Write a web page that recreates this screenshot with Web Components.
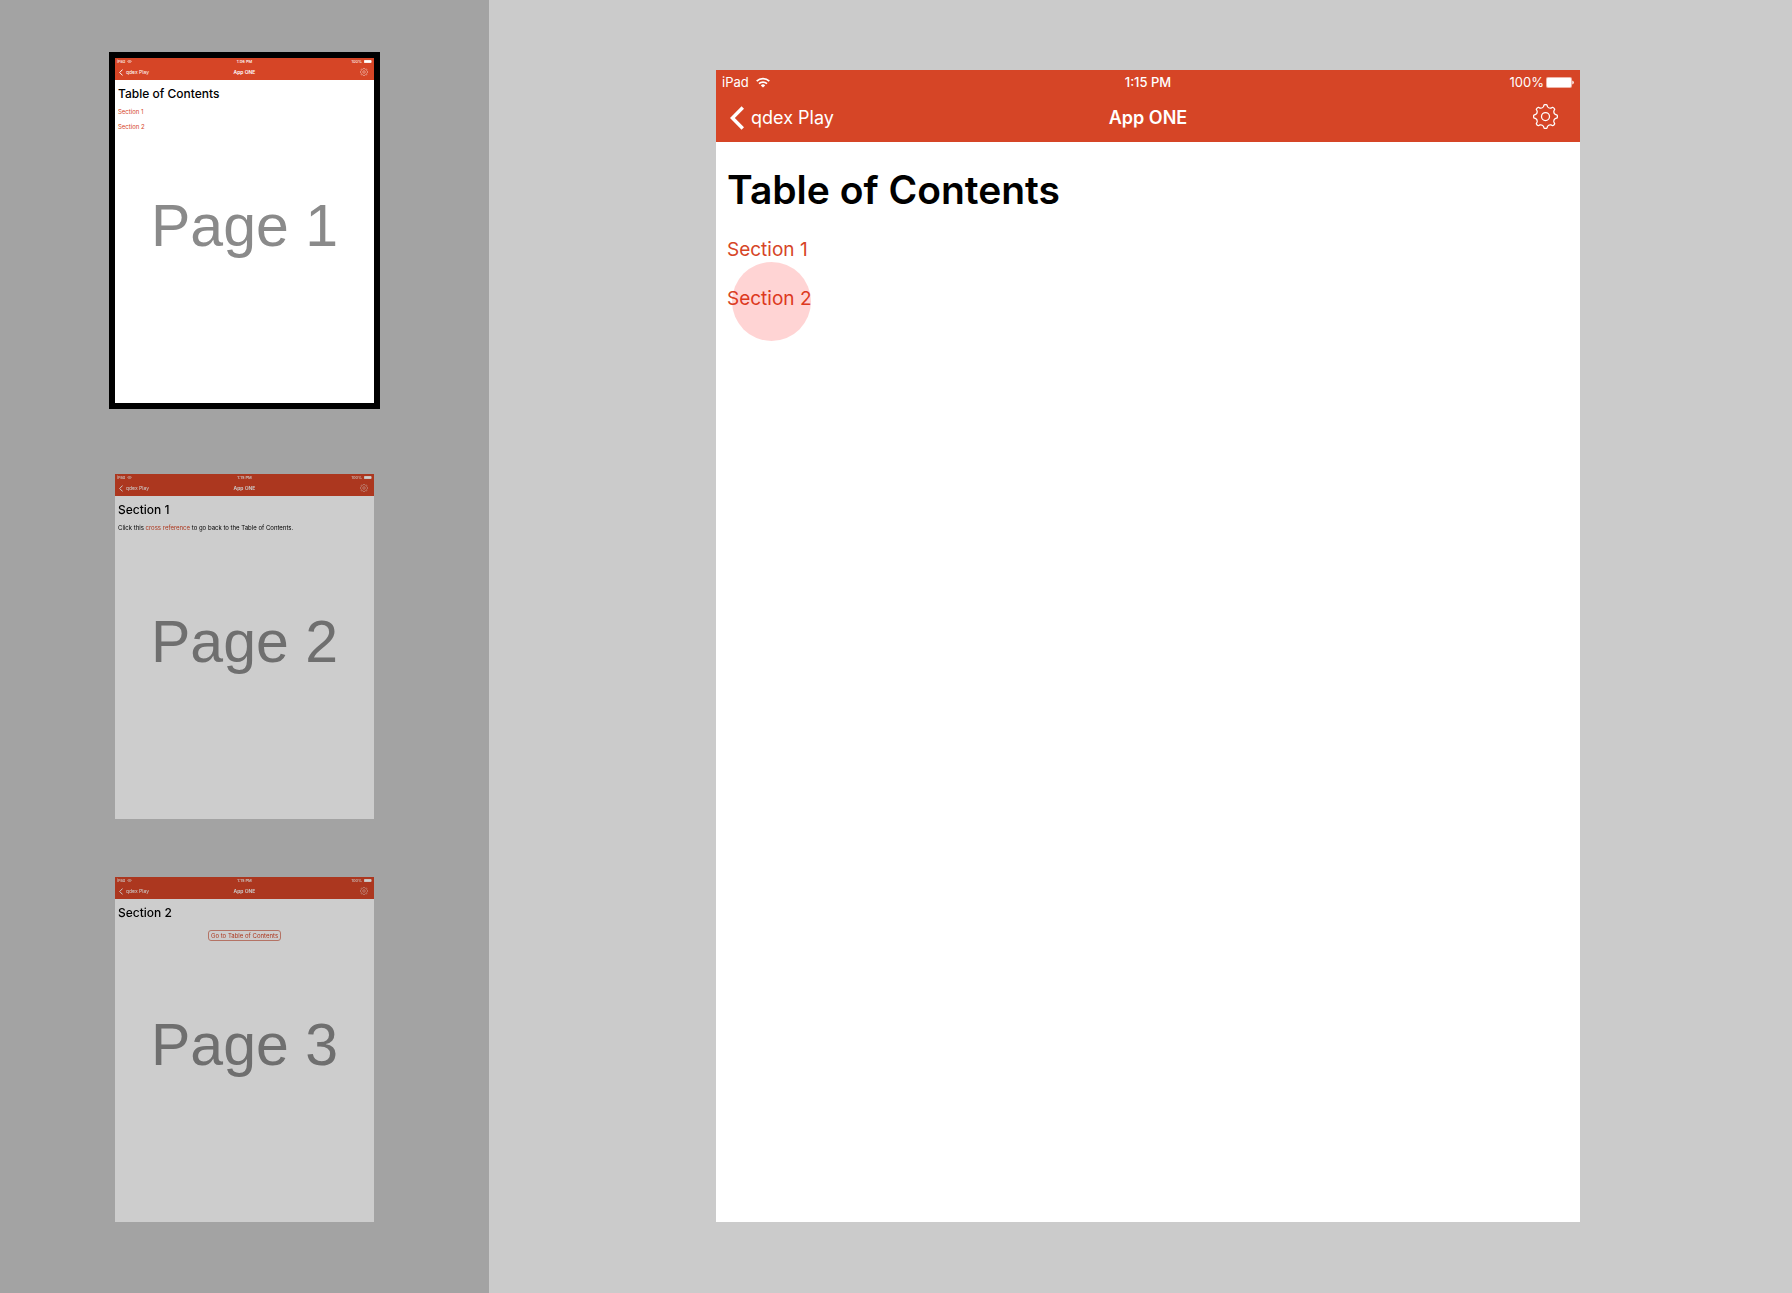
<!DOCTYPE html>
<html lang="en">
<head>
<meta charset="utf-8">
<title>App ONE – pages</title>
<style>
  html, body { margin: 0; min-height: 100%; }
  body { font-family: Inter, "Liberation Sans", sans-serif; background: #cbcbcb; }
</style>
</head>
<body>
<deck-viewer>
  <page-thumb slot="thumbs" label="Page 1" selected>
    <tablet-screen time="1:06 PM">
      <screen-heading>Table of Contents</screen-heading>
      <screen-link>Section 1</screen-link>
      <screen-link>Section 2</screen-link>
    </tablet-screen>
  </page-thumb>
  <page-thumb slot="thumbs" label="Page 2">
    <tablet-screen time="1:15 PM">
      <screen-heading>Section 1</screen-heading>
      <screen-text>Click this <screen-link inline>cross reference</screen-link> to go back to the Table of Contents.</screen-text>
    </tablet-screen>
  </page-thumb>
  <page-thumb slot="thumbs" label="Page 3">
    <tablet-screen time="1:15 PM">
      <screen-heading>Section 2</screen-heading>
      <screen-button>Go to Table of Contents</screen-button>
    </tablet-screen>
  </page-thumb>
  <tablet-screen slot="stage" large time="1:15 PM">
    <screen-heading>Table of Contents</screen-heading>
    <screen-link>Section 1</screen-link>
    <screen-link touched>Section 2</screen-link>
  </tablet-screen>
</deck-viewer>

<script>
const define = (name, html) => customElements.define(name, class extends HTMLElement {
  constructor() {
    super();
    this.attachShadow({ mode: "open" }).innerHTML = html;
  }
  connectedCallback() {
    for (const el of this.shadowRoot.querySelectorAll("[data-attr]"))
      el.textContent = this.getAttribute(el.dataset.attr) || "";
  }
});

/* Sidebar of thumbnails beside the current page */
define("deck-viewer", `
  <style>
    :host { display: flex; min-height: 100vh; background: #cbcbcb; }
    aside { box-sizing: border-box; flex: 0 0 489px; padding: 52px 0; background: #a3a3a3;
            display: flex; flex-direction: column; align-items: center; gap: 58px; }
    main { box-sizing: border-box; flex: 1; min-width: 0; padding: 70px 212px 70px 227px; }
  </style>
  <aside><slot name="thumbs"></slot></aside>
  <main><slot name="stage"></slot></main>
`);

/* Thumbnail with a large page label over it */
define("page-thumb", `
  <style>
    :host { display: block; position: relative; width: 259px; filter: brightness(0.804); }
    :host([selected]) { filter: none; border: 6px solid #000; margin-bottom: 7px; }
    .label { position: absolute; inset: 0; padding-bottom: 10px; display: flex; align-items: center;
             justify-content: center; pointer-events: none; color: #8a8a8a;
             font: 59px/68px "Liberation Sans", Arial, sans-serif; white-space: nowrap; }
  </style>
  <slot></slot>
  <div class="label" data-attr="label"></div>
`);

/* Tablet screen: status bar, navigation bar and content */
define("tablet-screen", `
  <style>
    :host {
      --status: 7px; --nav: 15px; --edge: 2px; --nav-x: 4px; --gear-r: 2px; --lift: 1px; --gap: 2px; --back-gap: 3px;
      --status-font: 4px; --nav-font: 5px;
      --wifi: 5px; --batt: 8px; --chev-w: 4px; --chev-h: 7px; --gear: 8px;
      --pad: 3px; --top: 7px; --h-font: 12px; --h-weight: 500; --h-line: 14px; --h-gap: 7px;
      --t-font: 6px; --t-line: 8px; --t-gap: 7px; --btn-line: 9px; --btn-top: 3px; --radius: 3px;
      display: flex; flex-direction: column; aspect-ratio: 259 / 345; background: #fff;
    }
    :host([large]) {
      --status: 24px; --nav: 48px; --edge: 6px; --nav-x: 14px; --gear-r: 8px; --lift: 4px; --gap: 7px; --back-gap: 7px;
      --status-font: 13px; --nav-font: 18px;
      --wifi: 14px; --batt: 28px; --chev-w: 14px; --chev-h: 24px; --gear: 25px;
      --pad: 11px; --top: 24px; --h-font: 39px; --h-weight: 600; --h-line: 48px; --h-gap: 24px;
      --t-font: 19px; --t-line: 24px; --t-gap: 25px; --btn-line: 32px; --btn-top: 10px; --radius: 10px;
      aspect-ratio: 3 / 4;
    }
    header { background: #d64526; color: #fff; }
    .row { display: grid; grid-template-columns: 1fr auto 1fr; align-items: center; white-space: nowrap; }
    .status { height: var(--status); padding: 0 var(--edge); font-size: var(--status-font); line-height: var(--status); }
    .time { font-weight: 500; }
    .nav { height: var(--nav); padding: 0 var(--nav-x); font-size: var(--nav-font); line-height: var(--nav); }
    .nav strong { font-weight: 600; }
    .start, .end, a { display: flex; align-items: center; }
    .start { gap: var(--gap); }
    .end { justify-content: flex-end; gap: 2px; }
    a { color: inherit; text-decoration: none; gap: var(--back-gap); justify-self: start; }
    button { all: unset; display: flex; justify-self: end; padding: 0 var(--gear-r) var(--lift) 0; }
    svg { display: block; flex: none; }
    .wifi { width: var(--wifi); } .batt { width: var(--batt); }
    .chev { width: var(--chev-w); height: var(--chev-h); }
    .gear { width: var(--gear); height: var(--gear); }
    section { flex: 1; display: flex; flex-direction: column; align-items: flex-start;
              padding: var(--top) var(--pad) 0; }
  </style>
  <header>
    <div class="row status">
      <span class="start"><span>iPad</span>
        <svg class="wifi" viewBox="0 0 14 11" fill="none" stroke="#fff" stroke-width="1.7">
          <path d="M.7 4.1a9 9 0 0 1 12.6 0M3 6.7a5.7 5.7 0 0 1 8 0"/>
          <path d="M7 10.6 4.8 8.4a3.1 3.1 0 0 1 4.4 0z" fill="#fff" stroke="none"/>
        </svg></span>
      <span class="time" data-attr="time"></span>
      <span class="end"><span>100%</span>
        <svg class="batt" viewBox="0 0 28 11">
          <rect width="26" height="11" rx="2" fill="#fff" fill-opacity=".6"/>
          <rect x="1" y="1" width="24" height="9" rx="1" fill="#fff"/>
          <path d="M26.3 3.6q1.5.4 1.5 1.9t-1.5 1.9z" fill="#fff"/>
        </svg></span>
    </div>
    <div class="row nav">
      <a href="#"><svg class="chev" viewBox="0 0 14 24" fill="none" stroke="#fff" stroke-width="3.4"><path d="M12.8 1.5 2.4 12l10.4 10.5"/></svg><span>qdex Play</span></a>
      <strong>App ONE</strong>
      <button type="button" aria-label="Settings"><svg class="gear" viewBox="0 0 25 25" fill="none" stroke="#fff" stroke-width="1.25" stroke-linejoin="round">
        <circle cx="12.5" cy="12.5" r="4"/>
        <path class="teeth"/>
      </svg></button>
    </div>
  </header>
  <section><slot></slot></section>
`);

/* Eight rounded teeth joined by shallow concave valleys */
{
  const pt = (r, deg) => {
    const a = deg * Math.PI / 180;
    return (12.5 + r * Math.sin(a)).toFixed(2) + " " + (12.5 - r * Math.cos(a)).toFixed(2);
  };
  let d = "M" + pt(11.7, -7);
  for (let i = 0; i < 8; i++) {
    const a = i * 45;
    d += "Q" + pt(12.2, a) + " " + pt(11.7, a + 7);
    d += "L" + pt(10, a + 12);
    d += "Q" + pt(8.6, a + 22.5) + " " + pt(10, a + 33);
    d += "L" + pt(11.7, a + 38);
  }
  for (const s of document.querySelectorAll("tablet-screen"))
    s.shadowRoot.querySelector(".teeth").setAttribute("d", d + "Z");
}

define("screen-heading", `
  <style>
    :host { display: block; margin-bottom: var(--h-gap); }
    h1 { margin: 0; font-size: var(--h-font); line-height: var(--h-line); font-weight: var(--h-weight); color: #000; white-space: nowrap; }
  </style>
  <h1><slot></slot></h1>
`);

define("screen-text", `
  <style>
    :host { display: block; }
    p { margin: 0; font-size: var(--t-font); line-height: var(--t-line); color: #000; white-space: nowrap; }
  </style>
  <p><slot></slot></p>
`);

define("screen-link", `
  <style>
    :host { display: block; position: relative; margin-bottom: var(--t-gap); font-size: var(--t-font); line-height: var(--t-line); }
    :host([inline]) { display: inline; margin: 0; }
    a { color: #d64526; text-decoration: none; }
    :host([touched])::after { content: ""; position: absolute; left: 5px; top: -25px; width: 79px; height: 79px;
      border-radius: 50%; background: rgba(255, 0, 0, 0.17); pointer-events: none; }
  </style>
  <a href="#"><slot></slot></a>
`);

define("screen-button", `
  <style>
    :host { display: block; align-self: center; margin-top: var(--btn-top); }
    button { display: block; margin: 0; padding: 0 2px; border: 1px solid #e08f7d; border-radius: var(--radius);
      background: none; color: #d64526; font-family: inherit; font-size: var(--t-font); line-height: var(--btn-line); white-space: nowrap; }
  </style>
  <button type="button"><slot></slot></button>
`);
</script>
</body>
</html>
